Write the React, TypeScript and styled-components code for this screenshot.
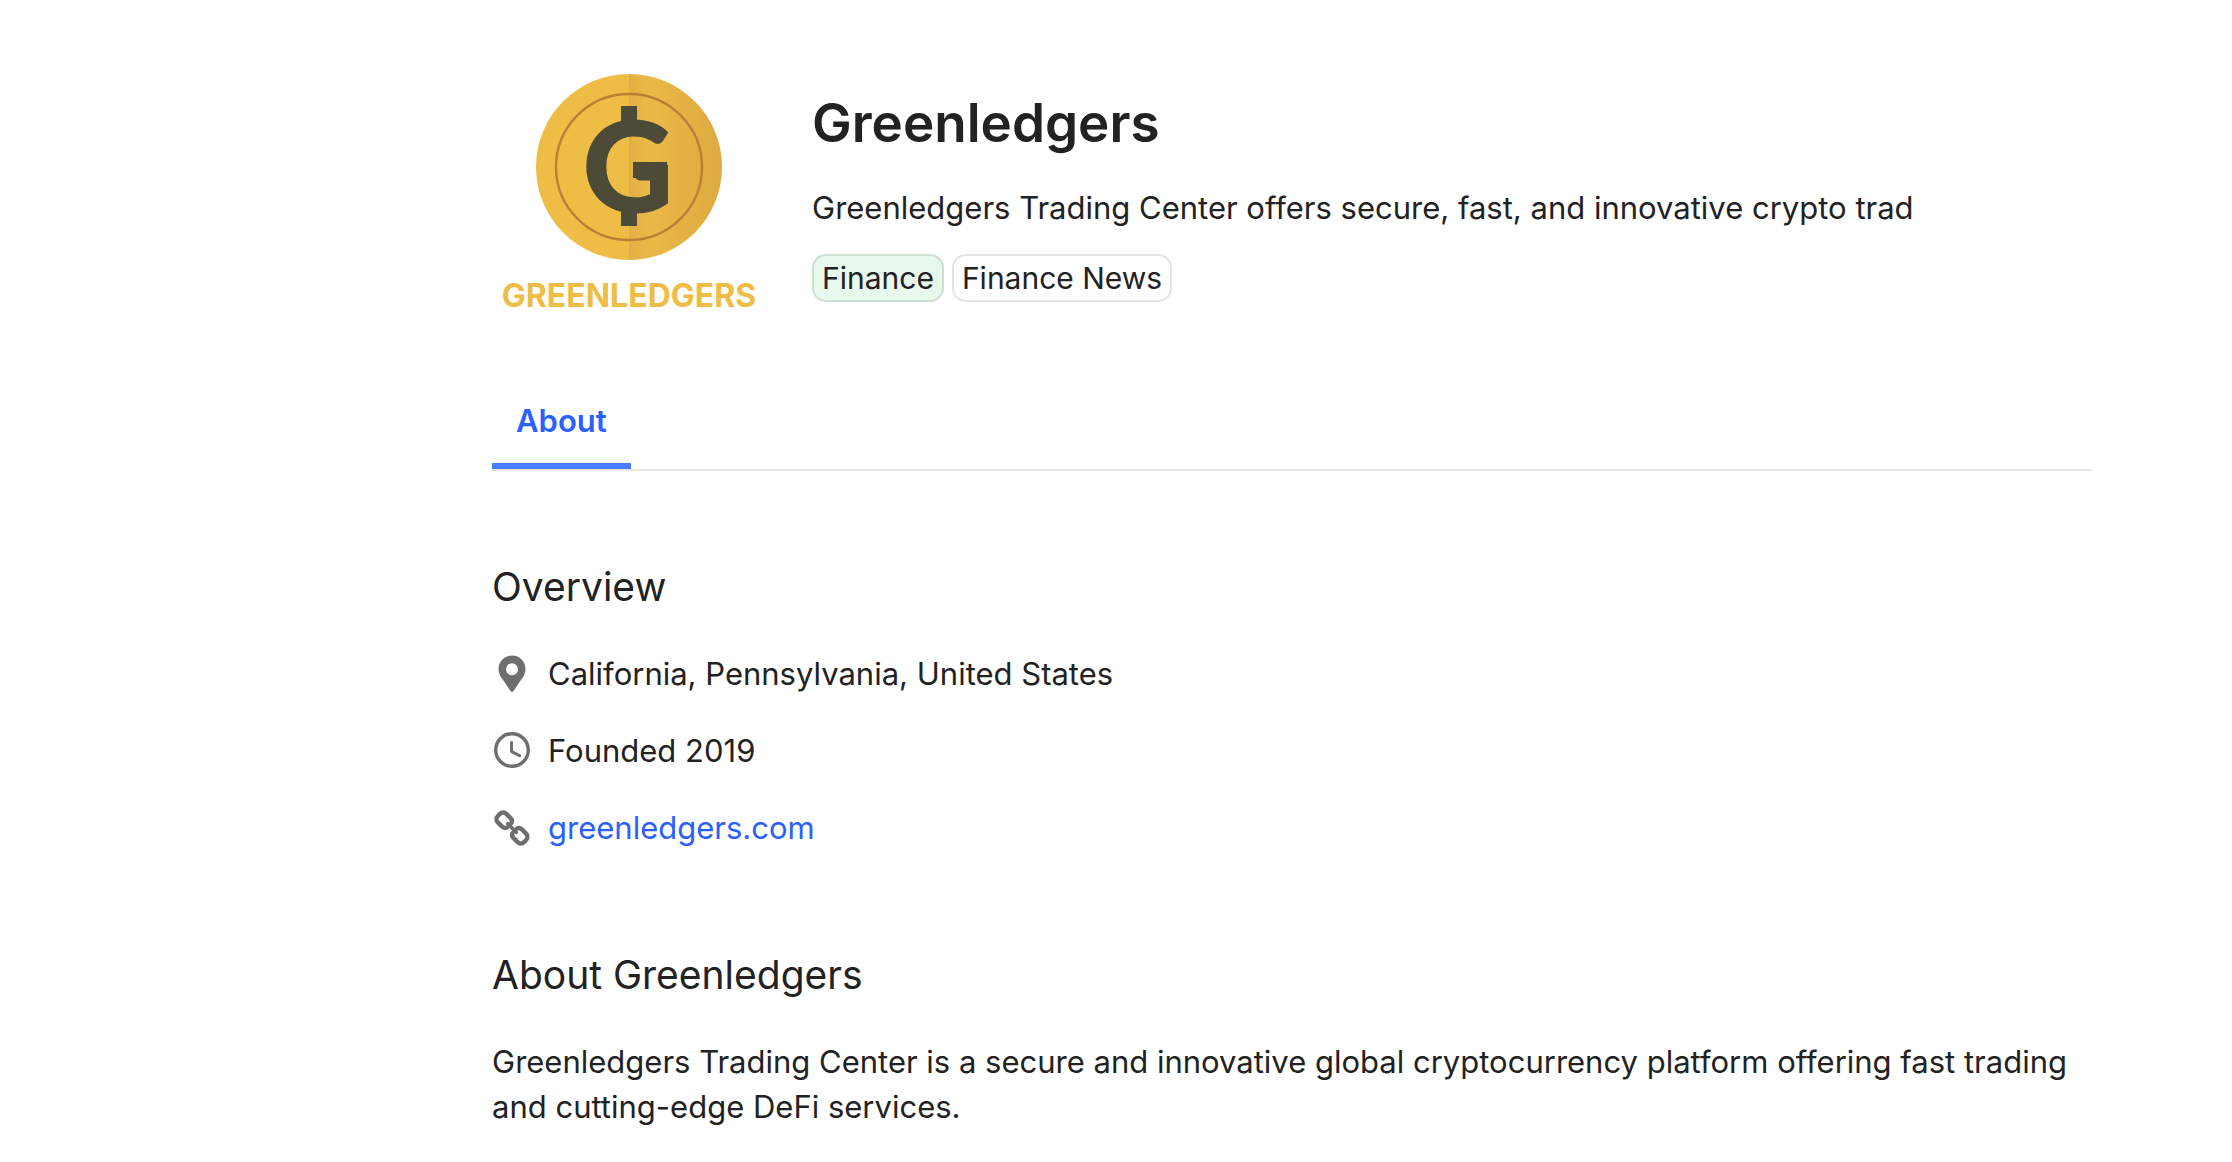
import React from "react";
import styled, { createGlobalStyle } from "styled-components";

const GlobalStyle = createGlobalStyle`
  * { box-sizing: border-box; }
  body {
    margin: 0;
    background: #fff;
    color: #222;
    font-family: Inter, "Liberation Sans", sans-serif;
    font-size: 31px;
    line-height: 45px;
  }
`;

const Page = styled.main`
  padding: 57px 140px 0 492px;
`;

const Header = styled.header`
  display: flex;
  align-items: flex-start;
  gap: 48px;
`;

const Logo = styled.svg`
  flex: none;
  width: 272px;
  height: 272px;
  border-radius: 28px;
`;

const Intro = styled.div`
  flex: 1;
  min-width: 0;
  padding-top: 34px;
`;

const Name = styled.h1`
  margin: 0 0 30px;
  font-size: 53px;
  line-height: 64px;
  font-weight: 600;
`;

const Text = styled.p`
  margin: 0;
`;

const Tags = styled.ul`
  display: flex;
  gap: 8px;
  margin: 24px 0 0;
  padding: 0;
  list-style: none;
`;

const Tag = styled.li<{ $primary?: boolean }>`
  padding: 1px 8px 0;
  font-size: 30px;
  line-height: 43px;
  border: 2px solid ${(p) => (p.$primary ? "#cfdfd4" : "#e4e4e4")};
  border-radius: 14px;
  background: ${(p) => (p.$primary ? "#e8f8ed" : "#fff")};
`;

const Tabs = styled.nav`
  display: flex;
  margin-top: 50px;
  border-bottom: 2px solid #e5e5e5;
`;

const Tab = styled.button`
  padding: 20px 24px;
  border: 0;
  border-bottom: 6px solid #4b7cff;
  background: none;
  color: #2b5fff;
  font: inherit;
  font-weight: 600;
  line-height: 44px;
  cursor: pointer;
`;

const Section = styled.section<{ $space: number }>`
  margin-top: ${(p) => p.$space}px;
`;

const Title = styled.h2`
  margin: 0 0 36px;
  font-size: 39px;
  line-height: 56px;
  font-weight: 400;
`;

const Facts = styled.ul`
  display: grid;
  gap: 32px;
  margin: 0;
  padding: 0;
  list-style: none;
`;

const Fact = styled.li`
  display: flex;
  align-items: center;
  gap: 16px;
`;

const Icon = styled.svg`
  flex: none;
  width: 40px;
  height: 40px;
  color: #6e6e6e;
`;

const SiteLink = styled.a`
  color: #2b5fff;
  text-decoration: none;
`;

const CompanyLogo = () => (
  <Logo viewBox="0 0 272 272" role="img" aria-label="Greenledgers logo">
    <defs>
      <linearGradient id="shade" x1="0" x2="1">
        <stop offset="0" stopColor="#eebd45" />
        <stop offset="0.5" stopColor="#eebd45" />
        <stop offset="0.5" stopColor="#e2b043" />
        <stop offset="0.62" stopColor="#eaba47" />
        <stop offset="0.8" stopColor="#e3b144" />
        <stop offset="1" stopColor="#dcaa3e" />
      </linearGradient>
    </defs>
    <circle cx="137" cy="110" r="93" fill="url(#shade)" />
    <circle cx="137" cy="110" r="73" fill="none" stroke="#b98136" strokeWidth="2.4" />
    <rect x="129" y="49" width="16" height="20" fill="#4d4a38" />
    <rect x="129" y="149" width="16" height="20" fill="#4d4a38" />
    <rect x="141" y="105" width="34" height="16" fill="#4d4a38" />
    <text
      x="136"
      y="154"
      textAnchor="middle"
      fontFamily="Lato, sans-serif"
      fontWeight="700"
      fontSize="123"
      fill="#4d4a38"
      stroke="#4d4a38"
      strokeWidth="3"
    >
      G
    </text>
    <text x="137" y="250" textAnchor="middle" fontFamily="Inter, sans-serif" fontWeight="700" fontSize="32" fill="#eebd45">GREENLEDGERS</text>
  </Logo>
);

const PinIcon = () => (
  <Icon viewBox="0 0 40 40" aria-hidden="true">
    <path
      fill="currentColor"
      fillRule="evenodd"
      d="M20 1.500C12.300 1.500 6.500 7.500 6.500 15c0 4 1.500 6.600 3.500 9.600l8.500 12.300c.8 1.200 2.200 1.200 3 0L30 24.600c2-3 3.500-5.600 3.500-9.600C33.500 7.500 27.700 1.500 20 1.500Zm0 7.700a6 6 0 1 1 0 12A6 6 0 0 1 20 9.200Z"
    />
  </Icon>
);

const ClockIcon = () => (
  <Icon viewBox="0 0 40 40" fill="none" stroke="currentColor" strokeLinecap="round" strokeLinejoin="round" aria-hidden="true">
    <circle cx="20" cy="19" r="16.300" strokeWidth="3.400" />
    <path d="M19.500 11.500v9l8 4.200" strokeWidth="3" />
  </Icon>
);

const ChainIcon = () => (
  <Icon viewBox="0 0 40 40" fill="none" stroke="currentColor" strokeWidth="4.400" strokeLinecap="round" strokeLinejoin="round" aria-hidden="true">
    <g transform="rotate(45 20 20)">
      <path d="M16 23A4 4 0 0 1 12 26H6A4.500 4.500 0 0 1 1.500 21.500V18.500A4.500 4.500 0 0 1 6 14H12A4 4 0 0 1 16 17" />
      <path d="M24 17A4 4 0 0 1 28 14H34A4.500 4.500 0 0 1 38.500 18.500V21.500A4.500 4.500 0 0 1 34 26H28A4 4 0 0 1 24 23" />
      <path d="M14 20H26" strokeWidth="3.600" />
    </g>
  </Icon>
);

export default function App() {
  return (
    <>
      <GlobalStyle />
      <Page>
        <Header>
          <CompanyLogo />
          <Intro>
            <Name>Greenledgers</Name>
            <Text>Greenledgers Trading Center offers secure, fast, and innovative crypto trad</Text>
            <Tags>
              <Tag $primary>Finance</Tag>
              <Tag>Finance News</Tag>
            </Tags>
          </Intro>
        </Header>
        <Tabs>
          <Tab type="button" aria-current="page">About</Tab>
        </Tabs>
        <Section $space={88}>
          <Title>Overview</Title>
          <Facts>
            <Fact>
              <PinIcon />
              California, Pennsylvania, United States
            </Fact>
            <Fact>
              <ClockIcon />
              Founded 2019
            </Fact>
            <Fact>
              <ChainIcon />
              <SiteLink href="#greenledgers">greenledgers.com</SiteLink>
            </Fact>
          </Facts>
        </Section>
        <Section $space={97}>
          <Title>About Greenledgers</Title>
          <Text>
            Greenledgers Trading Center is a secure and innovative global cryptocurrency platform offering fast trading
            and cutting-edge DeFi services.
          </Text>
        </Section>
      </Page>
    </>
  );
}
